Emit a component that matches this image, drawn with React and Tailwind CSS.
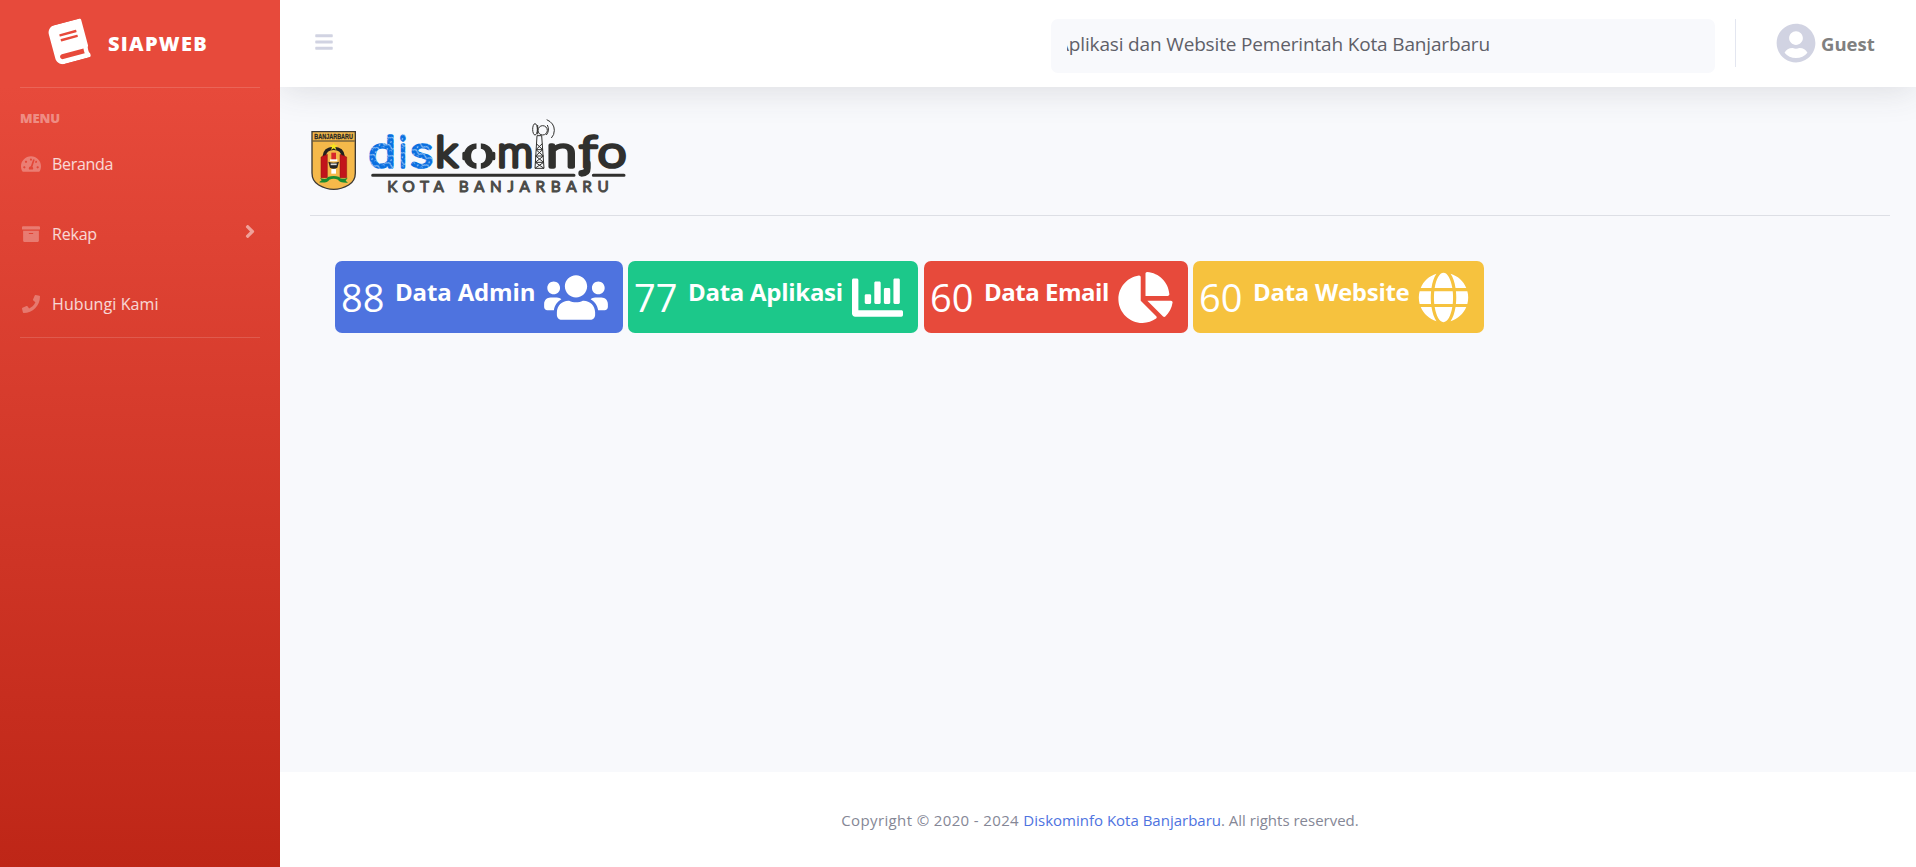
import { FaArchive, FaBars, FaBook, FaAngleRight, FaChartBar, FaChartPie, FaGlobe, FaPhone, FaTachometerAlt, FaUserCircle, FaUsers } from "react-icons/fa";

const menu = [
  { label: "Beranda", Icon: FaTachometerAlt, iconClass: "h-[18px] w-[20px]", spacing: "tracking-[-0.3px]" },
  { label: "Rekap", Icon: FaArchive, iconClass: "h-[18px] w-[18px]", arrow: true, spacing: "tracking-[-0.2px]" },
  { label: "Hubungi Kami", Icon: FaPhone, iconClass: "h-[18px] w-[18px]", spacing: "tracking-[0.1px]" },
];

const cards = [
  { count: 88, label: "Data Admin", Icon: FaUsers, card: "w-[288px] bg-[#4e73df]", text: "w-[149px] tracking-[-0.15px]", icon: "h-[51px] w-[64px]" },
  { count: 77, label: "Data Aplikasi", Icon: FaChartBar, card: "mr-px w-[290px] bg-[#1cc88a]", text: "w-[164px] tracking-[-0.28px]", icon: "h-[51px] w-[51px]" },
  { count: 60, label: "Data Email", Icon: FaChartPie, card: "w-[264px] bg-[#e74a3b]", text: "w-[134px] tracking-[-0.48px]", icon: "h-[51px] w-[55px]" },
  { count: 60, label: "Data Website", Icon: FaGlobe, card: "w-[291px] bg-[#f6c23e]", text: "w-[165px] tracking-[-0.28px]", icon: "h-[51px] w-[51px]" },
];

const wordmark = [
  ["d", 206, 80, "blue"],
  ["i", 298, 22, "blue"],
  ["s", 332, 66, "blue"],
  ["k", 406, 68, "dark"],
  ["o", 490, 92, "dark"],
  ["m", 592, 108, "dark"],
  ["n", 739, 92, "dark"],
  ["f", 838, 54, "dark"],
  ["o", 893, 86, "dark"],
];

function Crest() {
  return (
    <g>
      <path d="M36 80H166V204Q166 228 146 240Q124 253 101 253Q78 253 56 240Q36 228 36 204Z" fill="#f5b94a" stroke="#3d3a35" strokeWidth="4" />
      <path d="M38 108H164" stroke="#3d3a35" strokeWidth="3" />
      <text x="43" y="103" textLength="116" lengthAdjust="spacingAndGlyphs" fontSize="20" fontWeight="700" fill="#2b2a26" stroke="#2b2a26" strokeWidth="0.8" fontFamily="Liberation Sans, sans-serif">BANJARBARU</text>
      <path d="M72 156Q74 130 101 130Q128 130 130 156" fill="none" stroke="#23211f" strokeWidth="10" />
      <path d="M63 156L82 148V218H63ZM120 148L140 156V218H120Z" fill="#c2141b" stroke="#8c1313" strokeWidth="1.5" />
      <path d="M101 113L104 121H113L106 127L109 135L101 130L93 135L96 127L89 121H98Z" fill="#f7e71d" />
      <path d="M94 143H108V168H94Z" fill="#d7272b" />
      <path d="M90 163H112V169H90Z" fill="#fff" />
      <path d="M85 170Q101 176 117 170L112 188Q101 194 90 188Z" fill="#252525" />
      <path d="M92 178H110" stroke="#ddd" strokeWidth="5" />
      <path d="M94 192H108V206H94Z" fill="#fff" />
      <path d="M60 219Q80 226 84 216Q101 210 118 216Q122 226 143 218L137 227L144 233Q118 234 114 224Q101 219 88 224Q82 235 57 232L65 226Z" fill="#1b8c2f" />
    </g>
  );
}

function Logo() {
  return (
    <svg viewBox="30 30 960 252" className="block h-[84px] w-[320px]" role="img">
      <defs>
        <pattern id="batik" width="26" height="24" patternUnits="userSpaceOnUse" patternTransform="rotate(28)">
          <rect width="26" height="24" fill="#0a6fe0" />
          <path d="M0 7Q6 -1 13 7T26 7" fill="none" stroke="#d7e8fb" strokeWidth="2.6" />
          <circle cx="7" cy="18" r="2.4" fill="#d7e8fb" />
          <path d="M15 20Q20 12 24 18" fill="none" stroke="#a9cdf6" strokeWidth="2" />
        </pattern>
      </defs>
      <Crest />
      <g fontFamily="Lato, sans-serif" fontSize="130" fontWeight="300" strokeLinejoin="round" strokeLinecap="round" strokeWidth="11">
        {wordmark.map(([letter, x, width, tone]) => (
          <text key={x} x={x} y="187" textLength={width} lengthAdjust="spacingAndGlyphs" fill={tone === "blue" ? "url(#batik)" : "#30302e"} stroke={tone === "blue" ? "url(#batik)" : "#30302e"}>
            {letter}
          </text>
        ))}
      </g>
      <path d="M536 100V204" stroke="#f8f9fc" strokeWidth="13" />
      <path d="M492 145V161M581 145V161" stroke="#30302e" strokeWidth="10" strokeLinecap="round" />
      <path d="M862 175V190Q862 205 845 205" fill="none" stroke="#30302e" strokeWidth="20" strokeLinecap="round" />
      <path d="M218 211H822M880 211H972" stroke="#30302e" strokeWidth="9" strokeLinecap="round" />
      <g fill="none" stroke="#30302e" strokeWidth="3">
        <path d="M711 92L705 190H732L725 92ZM709 116L728 134L707 153L731 172L705 190M727 116L708 134L730 153L706 172L732 190M708 134H728M707 153H730M706 172H731" />
        <ellipse cx="705" cy="73" rx="7" ry="17" />
        <circle cx="728" cy="76" r="14" />
        <path d="M713 88V60M740 44Q763 54 763 76Q763 90 754 99M742 60Q750 76 739 90" />
      </g>
      <text x="262" y="262" textLength="664" lengthAdjust="spacing" fontFamily="Lato, sans-serif" fontSize="46" fontWeight="400" fill="#4b4b48" stroke="#4b4b48" strokeWidth="3" strokeLinejoin="round" strokeLinecap="round">KOTA BANJARBARU</text>
    </svg>
  );
}

function Sidebar() {
  return (
    <aside className="relative z-20 flex w-[280px] shrink-0 flex-col bg-[linear-gradient(180deg,#e74a3b_10%,#be2617_100%)] px-5 text-white">
      <div className="flex h-[87px] items-center pl-[29px]">
        <FaBook className="mb-[4px] h-[40px] w-[40px] shrink-0 -rotate-15" />
        <span className="ml-[19px] text-[20px] font-extrabold tracking-[1.3px]">SIAPWEB</span>
      </div>
      <div className="h-px bg-white/15" />
      <div className="flex h-[41px] items-end pb-px text-[13px] leading-[20px] font-extrabold tracking-[-0.1px] text-white/40">MENU</div>
      <nav>
        {menu.map(({ label, Icon, iconClass, arrow, spacing }) => (
          <a key={label} className="flex h-[70px] items-center">
            <span className="flex w-[21px] justify-center">
              <Icon className={`shrink-0 text-white/30 ${iconClass}`} />
            </span>
            <span className={`ml-[11px] text-[16px] text-white/80 ${spacing}`}>{label}</span>
            {arrow && <FaAngleRight className="mr-[1px] mb-[5px] ml-auto h-[21px] w-[18px] text-white/50" />}
          </a>
        ))}
      </nav>
      <div className="-mt-[2px] h-px bg-white/15" />
    </aside>
  );
}

function Topbar() {
  return (
    <header className="z-10 flex h-[87px] shrink-0 items-center bg-white shadow-[0_3px_35px_rgba(58,59,69,0.15)]">
      <FaBars className="mb-[3px] ml-[34px] h-[20px] w-[20px] text-[#d1d3e2]" />
      <div className="mt-[4px] ml-auto flex h-[54px] w-[664px] items-center rounded-[7px] bg-[#f8f9fc] px-4">
        <div className="flex h-full w-full items-center overflow-hidden">
          <span className="mb-[3px] -ml-[10px] text-[19px] tracking-[-0.16px] whitespace-nowrap text-[#5f6068]">Aplikasi dan Website Pemerintah Kota Banjarbaru</span>
        </div>
      </div>
      <div className="mb-px ml-5 h-12 w-px bg-[#e3e6f0]" />
      <FaUserCircle className="mb-px ml-[40px] h-10 w-10 text-[#d1d3e2]" />
      <span className="mr-[41px] ml-[5px] w-[54px] text-[18.5px] font-bold whitespace-nowrap text-[#808080]">Guest</span>
    </header>
  );
}

export default function App() {
  return (
    <div className="flex h-[867px] w-full overflow-hidden bg-[#f8f9fc] font-['Open_Sans','Noto_Sans',sans-serif]">
      <Sidebar />
      <div className="flex min-w-0 flex-1 flex-col">
        <Topbar />
        <main className="flex-1 pt-7 pr-[26px] pl-[30px]">
          <Logo />
          <div className="mt-4 h-px bg-[#dddfe5]" />
          <div className="mt-[45px] ml-[25px] flex gap-[5px]">
            {cards.map(({ count, label, Icon, card, text, icon }) => (
              <section key={label} className={`flex h-[72px] shrink-0 items-center rounded-[7px] pl-[6px] text-white ${card}`}>
                <span className="w-[54px] text-[38px] leading-none">{count}</span>
                <span className={`mb-[11px] shrink-0 text-[24px] leading-none font-bold whitespace-nowrap ${text}`}>{label}</span>
                <Icon className={`shrink-0 ${icon}`} />
              </section>
            ))}
          </div>
        </main>
        <footer className="flex h-[95px] shrink-0 items-center justify-center bg-white pt-[1px] pl-[4px] text-[15px] text-[#858796]">
          <span>
            <span className="tracking-[0.37px]">Copyright © 2020 - 2024 </span>
            <a className="text-[#4e73df]">Diskominfo Kota Banjarbaru</a>. All rights reserved.
          </span>
        </footer>
      </div>
    </div>
  );
}
